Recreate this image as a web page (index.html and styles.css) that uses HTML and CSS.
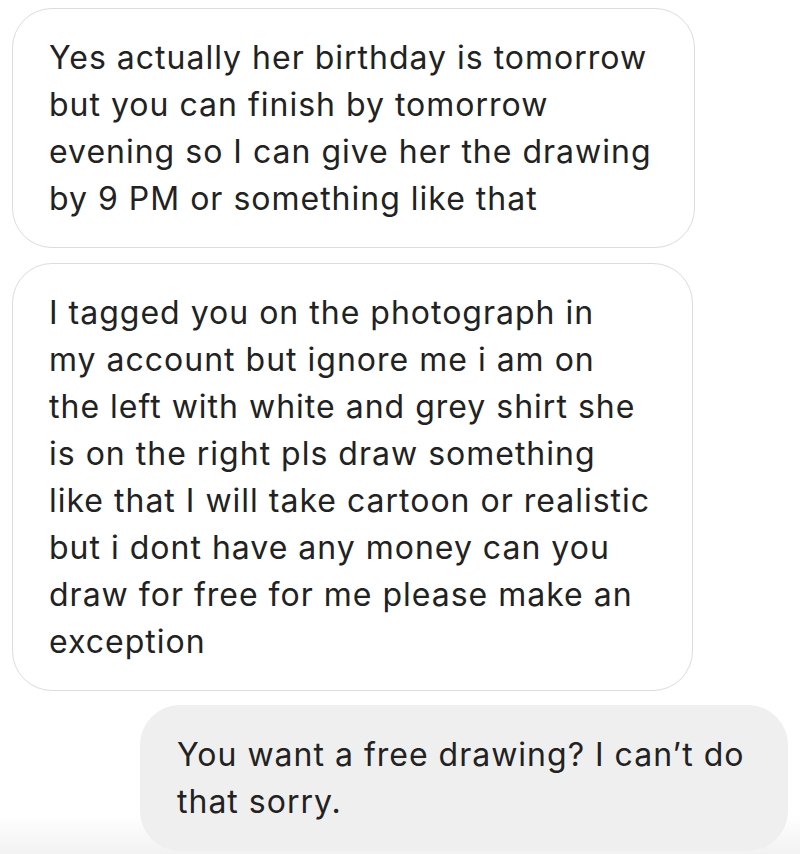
FILE: index.html
```html
<!DOCTYPE html>
<html lang="en">
<head>
<meta charset="utf-8">
<title>Chat</title>
<link rel="stylesheet" href="styles.css">
</head>
<body>
<main class="thread">
  <div class="bubble received b1">Yes actually her birthday is tomorrow<br>but you can finish by tomorrow<br>evening so I can give her the drawing<br>by 9 PM or something like that</div>
  <div class="bubble received b2">I tagged you on the photograph in<br>my account but ignore me i am on<br>the left with white and grey shirt she<br>is on the right pls draw something<br>like that I will take cartoon or realistic<br>but i dont have any money can you<br>draw for free for me please make an<br>exception</div>
  <div class="bubble sent b3">You want a free drawing? I can’t do<br>that sorry.</div>
</main>
</body>
</html>
```
FILE: styles.css
```css
html, body {
  margin: 0;
  padding: 0;
}
body {
  width: 800px;
  height: 854px;
  overflow: hidden;
  background: linear-gradient(to bottom, #ffffff 0, #ffffff 815px, #f2f2f2 854px);
  font-family: Inter, "Liberation Sans", Arial, sans-serif;
  color: #222222;
}
.thread {
  display: flex;
  flex-direction: column;
  padding: 8px 12px 0 12px;
  gap: 15px;
}
.bubble {
  box-sizing: border-box;
  font-size: 32px;
  line-height: 47px;
  letter-spacing: 1px;
  border-radius: 40px;
  padding: 25px 10px 25px 36px;
  white-space: nowrap;
}
.received {
  align-self: flex-start;
  background: #ffffff;
  border: 1px solid #dcdcdc;
}
.b1 { width: 683px; }
.b2 { width: 681px; }
.sent {
  align-self: flex-end;
  width: 648px;
  margin-top: -1px;
  background: #efefef;
  border: 1px solid #efefef;
}
```
